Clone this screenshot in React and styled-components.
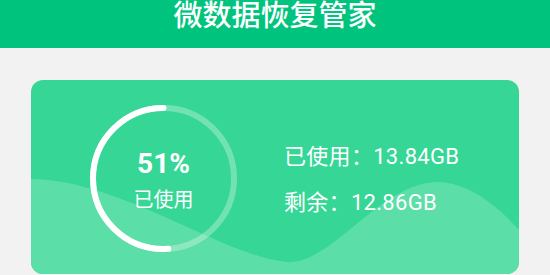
import React from 'react';
import styled, { createGlobalStyle } from 'styled-components';

const GlobalStyle = createGlobalStyle`
  body {
    margin: 0;
    background: #f2f2f2;
    font-family: Roboto, "Noto Sans CJK SC", sans-serif;
  }
`;

const Header = styled.header`
  height: 48px;
  background: #00c47e;
  color: #fff;
  font-size: 29px;
  font-weight: 500;
  line-height: 32px;
  text-align: center;
`;

const Main = styled.main`
  padding: 32px 31px 0;
`;

const Card = styled.section`
  position: relative;
  height: 194px;
  border-radius: 12px;
  background: #36d696;
  overflow: hidden;
  display: flex;
  align-items: center;
  padding-left: 59px;
  gap: 47px;
`;

const Wave = styled.svg`
  position: absolute;
  inset: 0;
  width: 100%;
  height: 100%;
`;

const Ring = styled.div`
  position: relative;
  display: grid;
  width: 147px;
  height: 147px;
  margin-top: 2px;

  & > * {
    grid-area: 1 / 1;
  }
`;

const RingLabel = styled.div`
  display: flex;
  flex-direction: column;
  align-items: center;
  justify-content: center;
  color: #fff;
  padding-top: 5px;
`;

const Percent = styled.div`
  font-size: 28px;
  font-weight: 700;
  line-height: 34px;
`;

const Caption = styled.div`
  margin-top: 5px;
  font-size: 20px;
  line-height: 28px;
`;

const Stats = styled.div`
  position: relative;
  display: flex;
  flex-direction: column;
  gap: 16px;
  margin-top: 6px;
  color: #fff;
  font-size: 22px;
  line-height: 30px;
`;

const Stat = styled.div`
  letter-spacing: 0.3px;
`;

function UsageRing({ percent }) {
  const r = 70.5;
  const len = 2 * Math.PI * r;
  return (
    <Ring>
      <svg width="147" height="147" viewBox="0 0 147 147">
        <circle cx="73.5" cy="73.5" r={r} fill="none" stroke="rgba(255,255,255,0.3)" strokeWidth="6" />
        <circle
          cx="73.5"
          cy="73.5"
          r={r}
          fill="none"
          stroke="#fff"
          strokeWidth="6"
          strokeLinecap="round"
          strokeDasharray={`${len * percent / 100} ${len}`}
          transform="translate(147 0) scale(-1 1) rotate(-90 73.5 73.5)"
        />
      </svg>
      <RingLabel>
        <Percent>{percent}%</Percent>
        <Caption>已使用</Caption>
      </RingLabel>
    </Ring>
  );
}

export default function App() {
  return (
    <>
      <GlobalStyle />
      <Header>微数据恢复管家</Header>
      <Main>
        <Card>
          <Wave viewBox="0 0 488 194" preserveAspectRatio="none">
            <path
              d="M0 99 C90 100 190 175 255 182 C300 186 350 102 406 102 C440 102 470 130 488 150 L488 194 L0 194 Z"
              fill="#5cdea8"
            />
          </Wave>
          <UsageRing percent={51} />
          <Stats>
            <Stat>已使用：13.84GB</Stat>
            <Stat>剩余：12.86GB</Stat>
          </Stats>
        </Card>
      </Main>
    </>
  );
}
